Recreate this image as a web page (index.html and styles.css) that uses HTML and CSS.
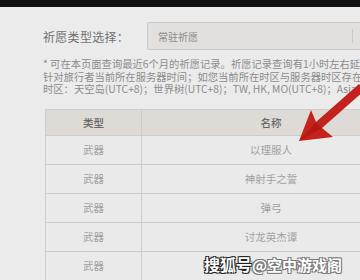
FILE: index.html
```
<!DOCTYPE html>
<html lang="zh-CN">
<head>
<meta charset="utf-8">
<title>祈愿记录</title>
<link rel="stylesheet" href="styles.css">
</head>
<body>
<div class="topbar"></div>
<div class="page">
  <div class="filter">
    <span class="filter-label">祈愿类型选择：</span>
    <div class="select">
      <span class="select-value">常驻祈愿</span>
      <span class="select-divider"></span>
    </div>
  </div>
  <div class="notes">
    <div class="note-line">* 可在本页面查询最近6个月的祈愿记录。祈愿记录查询有1小时左右延迟，记录中的时间</div>
    <div class="note-line">针对旅行者当前所在服务器时间；如您当前所在时区与服务器时区存在差异，请注意换算。服务器</div>
    <div class="note-line">时区：天空岛(UTC+8)；世界树(UTC+8)；TW, HK, MO(UTC+8)；Asia(UTC+8)</div>
  </div>
  <table class="records">
    <thead>
      <tr><th class="col-type">类型</th><th class="col-name">名称</th></tr>
    </thead>
    <tbody>
      <tr><td>武器</td><td>以理服人</td></tr>
      <tr><td>武器</td><td>神射手之誓</td></tr>
      <tr><td>武器</td><td>弹弓</td></tr>
      <tr><td>武器</td><td>讨龙英杰谭</td></tr>
      <tr><td>武器</td><td>沐浴龙血的剑</td></tr>
    </tbody>
  </table>
</div>
<svg class="arrow" width="360" height="280" viewBox="0 0 360 280">
  <polygon points="299,141 311,110 316,122 359,84 364,91 322,128 333,137" fill="#c4221c"/>
  <polygon points="299,141 316,122 322,128" fill="#a8150f" opacity="0.6"/>
</svg>
<div class="watermark"><span class="wm-brand">搜狐号</span><span class="wm-name">@空中游戏阁</span></div>
</body>
</html>
```
FILE: styles.css
```
html, body {
  margin: 0;
  padding: 0;
}
body {
  width: 360px;
  height: 280px;
  overflow: hidden;
  position: relative;
  background: #ebebeb;
  font-family: "Noto Sans CJK SC", "Noto Sans", sans-serif;
  color: #888;
}
.topbar {
  height: 7px;
  background: #111;
}
.page {
  width: 640px;
  padding-left: 43px;
}
.filter {
  display: flex;
  align-items: center;
  margin-top: 15px;
}
.filter-label {
  font-size: 12px;
  color: #707070;
  letter-spacing: 0.3px;
  width: 104px;
  flex-shrink: 0;
}
.select {
  display: flex;
  align-items: center;
  width: 300px;
  height: 26px;
  flex-shrink: 0;
  background: #e2e0de;
  border: 1px solid #cbcac8;
  border-radius: 2px;
}
.select-value {
  font-size: 10px;
  color: #8a8a8a;
  padding-left: 10px;
  width: 194px;
}
.select-divider {
  width: 1px;
  height: 14px;
  background: #c9c9c9;
}
.notes {
  margin-top: 8px;
  font-size: 10.3px;
  line-height: 12.5px;
  color: #8c8c8c;
}
.note-line {
  white-space: nowrap;
}
.records {
  margin-top: 13px;
  margin-left: 2px;
  border-collapse: collapse;
  font-size: 10.5px;
}
.records th,
.records td {
  border: 1px solid #cdcdcd;
  text-align: center;
  padding: 0;
}
.records th {
  height: 25px;
  background: #dedad6;
  color: #666;
  font-weight: 500;
}
.records td {
  height: 28px;
  color: #a0a0a0;
  background: #eaeaea;
}
.col-type {
  width: 95px;
}
.col-name {
  width: 258px;
}
.arrow {
  position: absolute;
  left: 0;
  top: 0;
}
.watermark {
  position: absolute;
  left: 204px;
  top: 254px;
  font-size: 16px;
  font-weight: 700;
  line-height: 20px;
  white-space: nowrap;
  color: #fff;
}
.wm-brand {
  text-shadow: -1px -1px 0 #222, 1px -1px 0 #222, -1px 1px 0 #222, 1px 1px 0 #222;
}
.wm-name {
  font-size: 15px;
  text-shadow: -1px -1px 0 #777, 1px -1px 0 #777, -1px 1px 0 #777, 1px 1px 0 #777;
}
```
